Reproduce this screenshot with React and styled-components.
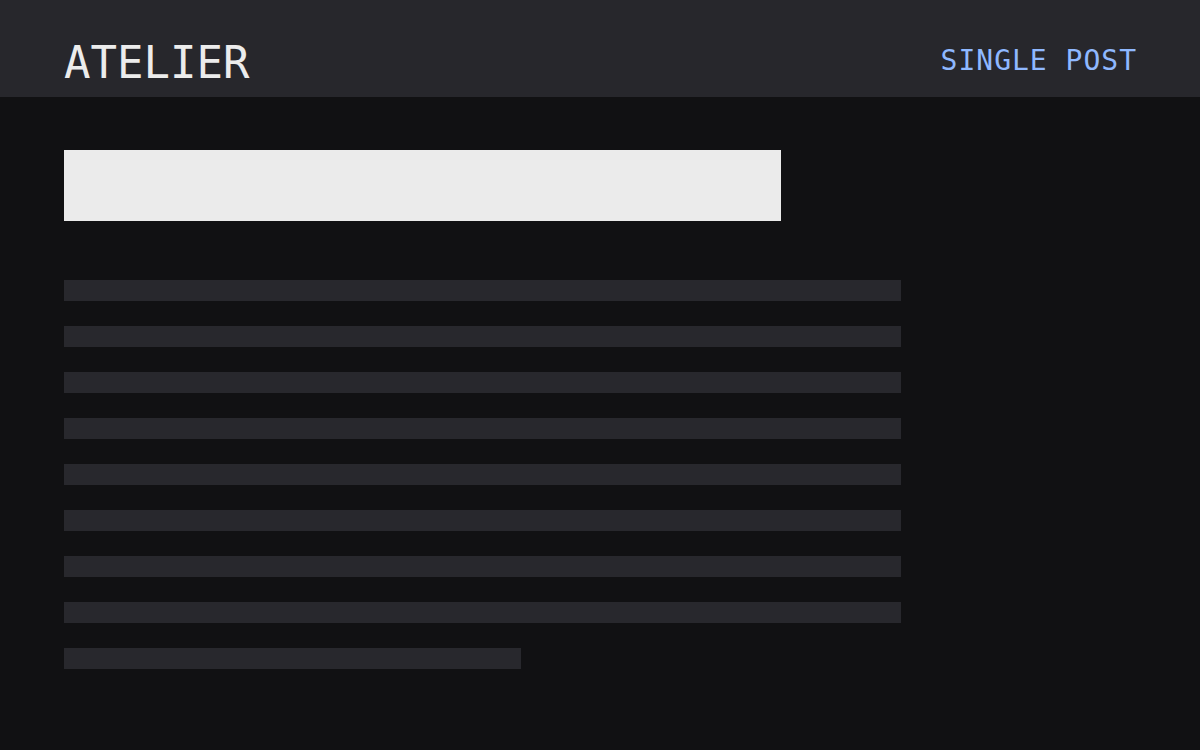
import React from "react";
import styled, { createGlobalStyle } from "styled-components";

const Global = createGlobalStyle`
    html, body {
        margin: 0;
        padding: 0;
        background: #111113;
    }
    body {
        font-family: "DejaVu Sans Mono", "Liberation Mono", monospace;
    }
`;

const Page = styled.div`
    width: 1200px;
    height: 750px;
    background: #111113;
    overflow: hidden;
`;

const Header = styled.header`
    height: 97px;
    box-sizing: border-box;
    padding: 24px 64px 0;
    background: #27272c;
    display: flex;
    justify-content: space-between;
    align-items: center;
`;

const Brand = styled.div`
    font-size: 44px;
    line-height: 1;
    margin-top: 5px;
    color: #ececec;
`;

const Tag = styled.div`
    font-size: 28px;
    line-height: 1;
    letter-spacing: 1px;
    margin-right: -1px;
    color: #8fb8ff;
`;

const Article = styled.main`
    padding: 53px 64px 0;
    display: flex;
    flex-direction: column;
`;

const Title = styled.div`
    width: 717px;
    height: 71px;
    background: #ebebeb;
    margin-bottom: 59px;
`;

const Lines = styled.div`
    display: flex;
    flex-direction: column;
    gap: 25px;
`;

const Line = styled.div`
    width: ${(p) => p.$w}px;
    height: 21px;
    background: #28282d;
`;

const widths = [837, 837, 837, 837, 837, 837, 837, 837, 457];

const App = () => {
    return (
        <>
            <Global />
            <Page>
                <Header>
                    <Brand>ATELIER</Brand>
                    <Tag>SINGLE POST</Tag>
                </Header>
                <Article>
                    <Title />
                    <Lines>
                        {widths.map((w, i) => (
                            <Line key={i} $w={w} />
                        ))}
                    </Lines>
                </Article>
            </Page>
        </>
    );
};

export default App;
